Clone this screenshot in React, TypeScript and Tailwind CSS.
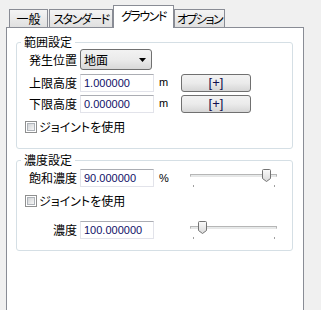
import React from "react";

const jp = "font-['Noto_Sans_CJK_JP','Noto_Sans',sans-serif] [font-feature-settings:'palt']";
const num = "font-['Liberation_Sans',Arial,sans-serif]";

function Tab({ label, w, active, tight }: { label: string; w: string; active?: boolean; tight?: boolean }) {
  const track = tight ? "tracking-[-1.5px]" : "";
  if (active) {
    return (
      <div
        className={`${w} ${track} h-[23px] bg-white border border-b-0 border-[#898c95] flex justify-center pt-[2px] leading-[16px] whitespace-nowrap`}
      >
        {label}
      </div>
    );
  }
  return (
    <div
      className={`${w} ${track} h-[18px] mb-[1px] bg-linear-to-b from-[#f4f4f4] to-[#e0e0e0] border border-b-0 border-[#898c95] flex items-center justify-center leading-[16px] whitespace-nowrap`}
    >
      {label}
    </div>
  );
}

function Group({ title, children }: { title: string; children: React.ReactNode }) {
  return (
    <fieldset className="border border-[#d5dfe5] rounded-[3px] mx-[9px] w-[277px]">
      <legend className="ml-[4px] px-[3px] leading-[16px]">{title}</legend>
      {children}
    </fieldset>
  );
}

function Field({ value }: { value: string }) {
  return (
    <div
      className={`${num} w-[74px] h-[18px] border border-[#e2e3ea] border-t-[#abadb3] bg-white text-[11px] text-[#101068] leading-[16px] pl-[3px]`}
    >
      {value}
    </div>
  );
}

function Label({ text }: { text: string }) {
  return <div className="w-[60px] mr-[3px] text-right leading-[16px] whitespace-nowrap">{text}</div>;
}

function Check({ text }: { text: string }) {
  return (
    <div className="flex items-center ml-[8px] gap-[2px]">
      <div className="w-[12px] h-[12px] border border-[#8e8f8f] bg-white p-[1px]">
        <div className="w-full h-full border border-[#aeb3b9] bg-linear-to-br from-[#d2d4d6] to-[#f6f6f6]" />
      </div>
      <span className="leading-[16px] whitespace-nowrap">{text}</span>
    </div>
  );
}

function PlusButton() {
  return (
    <div
      className={`${num} w-[70px] h-[18px] border border-[#707070] rounded-[3px] bg-linear-to-b from-[#f2f2f2] via-[#ebebeb] to-[#d6d6d6] flex items-center justify-center text-[13px] text-[#10104e]`}
    >
      [+]
    </div>
  );
}

function Slider({ pos }: { pos: number }) {
  return (
    <div className="relative w-[92px] h-[20px]">
      <div className="absolute left-[4px] right-[1px] top-[5px] h-[3px] border border-[#b6b6b6] border-b-[#e6e6e6] bg-[#e7eaea]" />
      <svg
        className="absolute top-0"
        style={{ left: pos }}
        width="9"
        height="13"
        viewBox="0 0 9 13"
      >
        <defs>
          <linearGradient id="th" x1="0" y1="0" x2="0" y2="1">
            <stop offset="0" stopColor="#fbfbfb" />
            <stop offset="1" stopColor="#d9d9d9" />
          </linearGradient>
        </defs>
        <path
          d="M1.5 0.5 H7.5 Q8.5 0.5 8.5 1.5 V9.5 L4.5 12.5 L0.5 9.5 V1.5 Q0.5 0.5 1.5 0.5 Z"
          fill="url(#th)"
          stroke="#737373"
        />
      </svg>
      <div className="absolute left-[7px] top-[16px] w-[1px] h-[2px] bg-[#a0a0a0]" />
      <div className="absolute left-[88px] top-[16px] w-[1px] h-[2px] bg-[#a0a0a0]" />
    </div>
  );
}

export default function App() {
  return (
    <div className={`${jp} w-[321px] h-[310px] bg-[#f0f0f0] overflow-hidden text-[12px] text-black`}>
      <div className="ml-[6px] w-[298px] pt-[5px]">
        <div className="relative z-10 flex items-end h-[23px] pl-[3px]">
          <Tab label="一般" w="w-[39px]" />
          <div className="w-[1px]" />
          <Tab label="スタンダード" w="w-[64px]" tight />
          <Tab label="グラウンド" w="w-[61px]" active tight />
          <Tab label="オプション" w="w-[51px]" tight />
        </div>
        <div className="-mt-[1px] h-[300px] border border-[#898c95] bg-white pt-[6px]">
          <Group title="範囲設定">
            <div className="flex items-center h-[21px] -mt-[1px]">
              <Label text="発生位置" />
              <div className="w-[72px] h-[21px] border border-[#707070] rounded-[3px] bg-linear-to-b from-[#f2f2f2] via-[#ebebeb] to-[#d8d8d8] flex items-center justify-between pl-[3px] pr-[5px]">
                <span className="leading-[16px]">地面</span>
                <svg width="7" height="4" viewBox="0 0 7 4">
                  <path d="M0 0 H7 L3.5 4 Z" fill="#000" />
                </svg>
              </div>
            </div>
            <div className="flex items-center h-[19px] mt-[3px]">
              <Label text="上限高度" />
              <Field value="1.000000" />
              <div className={`${num} w-[27px] pl-[5px] text-[11px]`}>m</div>
              <PlusButton />
            </div>
            <div className="flex items-center h-[19px] mt-[2px]">
              <Label text="下限高度" />
              <Field value="0.000000" />
              <div className={`${num} w-[27px] pl-[5px] text-[11px]`}>m</div>
              <PlusButton />
            </div>
            <div className="mt-[6px] mb-[13px]">
              <Check text="ジョイントを使用" />
            </div>
          </Group>
          <div className="h-[3px]" />
          <Group title="濃度設定">
            <div className="flex items-start h-[20px] mt-[1px]">
              <div className="flex items-center h-[18px]">
                <Label text="飽和濃度" />
                <Field value="90.000000" />
                <div className={`${num} w-[32px] pl-[5px] text-[11px]`}>%</div>
              </div>
              <Slider pos={76} />
            </div>
            <div className="mt-[4px]">
              <Check text="ジョイントを使用" />
            </div>
            <div className="flex items-start h-[20px] mt-[12px] mb-[9px]">
              <div className="flex items-center h-[18px]">
                <Label text="濃度" />
                <Field value="100.000000" />
                <div className="w-[32px]" />
              </div>
              <Slider pos={12} />
            </div>
          </Group>
        </div>
      </div>
    </div>
  );
}
